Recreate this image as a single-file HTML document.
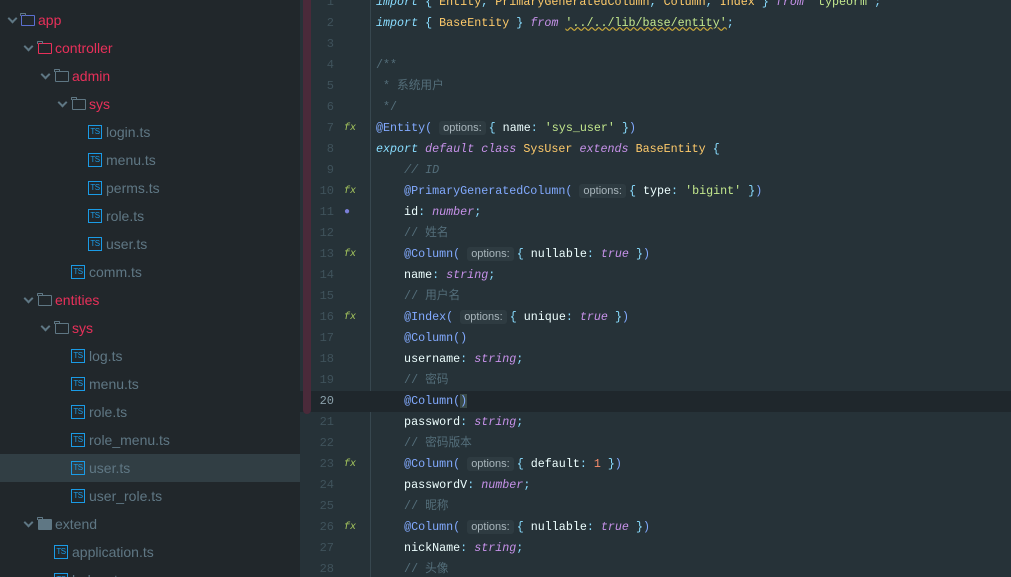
<!DOCTYPE html><html><head><meta charset="utf-8"><style>
*{margin:0;padding:0;box-sizing:border-box}
html,body{width:1011px;height:577px;overflow:hidden}
body{background:#263238;position:relative;font-family:"Liberation Sans","Noto Sans CJK SC",sans-serif}
#side{position:absolute;left:0;top:0;width:300px;height:577px;background:#21272b;overflow:hidden}
.r{position:absolute;left:0;width:300px;height:28px;font-size:14px;line-height:28px;color:#5f7784}
.r.sel{background:#313e44}
.r .a{position:absolute;top:9px;width:7px;height:7px;border-right:2px solid #5f7784;border-bottom:2px solid #5f7784;transform:rotate(45deg)}
.r .f{position:absolute;top:9px;width:14px;height:11px;border:1.6px solid #5f7784;border-radius:1px}
.r .f:before{content:"";position:absolute;left:-1.6px;top:-3.5px;width:6px;height:3px;border:1.6px solid #5f7784;border-bottom:none;border-radius:1px 1px 0 0;box-sizing:border-box}
.r .f.fill{background:#5f7784}
.r .ts{position:absolute;top:7px;width:14px;height:14px;border:1.3px solid #1a9be6;color:#1a9be6;font-size:8px;line-height:12px;text-align:center;font-style:normal;font-family:"Liberation Sans",sans-serif;letter-spacing:-0.5px}
.r .t{position:absolute}
.red{color:#e8305a}
#ed{position:absolute;left:300px;top:0;width:711px;height:577px;overflow:hidden}
#stripe{position:absolute;left:3px;top:0;width:8px;height:414px;background:#4a2a3a;border-radius:0 0 4px 4px}
#gl{position:absolute;left:70px;top:0;width:1px;height:577px;background:#37474f}
.l{position:absolute;left:0;width:711px;height:21px;line-height:21px;font-family:"Liberation Mono","Noto Sans CJK SC",monospace;font-size:11.7px;color:#eeffff;white-space:pre}
.l.cur{background:#1f272c}
.n{position:absolute;left:0;width:34px;text-align:right;color:#3f525b;font-size:12px}
.cur .n{color:#8aa0aa}
.c{position:absolute;left:76px}
.k{color:#89ddff;font-style:italic}.p{color:#c792ea;font-style:italic}.y{color:#ffcb6b}.s{color:#c3e88d}.u{color:#89ddff}.d{color:#82aaff}.cm{color:#546e7a}.cz{color:#546e7a}.nm{color:#f78c6c}
.h{font-family:"Liberation Sans",sans-serif;font-size:11px;color:#a8b5bb;background:#2e3b41;border-radius:3px;padding:1px 4px;margin-right:3px}
.g{position:absolute;left:44px;color:#a7c85e;font-size:10px;font-style:italic}
.und{text-decoration:underline wavy #c9a83a}
</style></head><body>
<div id="side">
<div class="r" style="top:6px"><i class="a" style="left:9px"></i><i class="f" style="left:21px;border-color:#5b6fd0"></i><span class="t red" style="left:38px">app</span></div>
<div class="r" style="top:34px"><i class="a" style="left:25px"></i><i class="f" style="left:38px;border-color:#e8305a"></i><span class="t red" style="left:55px">controller</span></div>
<div class="r" style="top:62px"><i class="a" style="left:42px"></i><i class="f" style="left:55px"></i><span class="t red" style="left:72px">admin</span></div>
<div class="r" style="top:90px"><i class="a" style="left:59px"></i><i class="f" style="left:72px"></i><span class="t red" style="left:89px">sys</span></div>
<div class="r" style="top:118px"><i class="ts" style="left:88px">TS</i><span class="t" style="left:106px">login.ts</span></div>
<div class="r" style="top:146px"><i class="ts" style="left:88px">TS</i><span class="t" style="left:106px">menu.ts</span></div>
<div class="r" style="top:174px"><i class="ts" style="left:88px">TS</i><span class="t" style="left:106px">perms.ts</span></div>
<div class="r" style="top:202px"><i class="ts" style="left:88px">TS</i><span class="t" style="left:106px">role.ts</span></div>
<div class="r" style="top:230px"><i class="ts" style="left:88px">TS</i><span class="t" style="left:106px">user.ts</span></div>
<div class="r" style="top:258px"><i class="ts" style="left:71px">TS</i><span class="t" style="left:89px">comm.ts</span></div>
<div class="r" style="top:286px"><i class="a" style="left:25px"></i><i class="f" style="left:38px"></i><span class="t red" style="left:55px">entities</span></div>
<div class="r" style="top:314px"><i class="a" style="left:42px"></i><i class="f" style="left:55px"></i><span class="t red" style="left:72px">sys</span></div>
<div class="r" style="top:342px"><i class="ts" style="left:71px">TS</i><span class="t" style="left:89px">log.ts</span></div>
<div class="r" style="top:370px"><i class="ts" style="left:71px">TS</i><span class="t" style="left:89px">menu.ts</span></div>
<div class="r" style="top:398px"><i class="ts" style="left:71px">TS</i><span class="t" style="left:89px">role.ts</span></div>
<div class="r" style="top:426px"><i class="ts" style="left:71px">TS</i><span class="t" style="left:89px">role_menu.ts</span></div>
<div class="r sel" style="top:454px"><i class="ts" style="left:71px">TS</i><span class="t" style="left:89px">user.ts</span></div>
<div class="r" style="top:482px"><i class="ts" style="left:71px">TS</i><span class="t" style="left:89px">user_role.ts</span></div>
<div class="r" style="top:510px"><i class="a" style="left:25px"></i><i class="f fill" style="left:38px"></i><span class="t" style="left:55px">extend</span></div>
<div class="r" style="top:538px"><i class="ts" style="left:54px">TS</i><span class="t" style="left:72px">application.ts</span></div>
<div class="r" style="top:566px"><i class="ts" style="left:54px">TS</i><span class="t" style="left:72px">helper.ts</span></div>
</div>
<div id="ed">
<div id="gl"></div>
<div class="l" style="top:-8.5px"><span class="n">1</span><span class="c"><span class="k">import</span> <span class="u">{</span> <span class="y">Entity</span><span class="u">,</span> <span class="y">PrimaryGeneratedColumn</span><span class="u">,</span> <span class="y">Column</span><span class="u">,</span> <span class="y">Index</span> <span class="u">}</span> <span class="p">from</span> <span class="s">'typeorm'</span><span class="u">;</span></span></div>
<div class="l" style="top:12.5px"><span class="n">2</span><span class="c"><span class="k">import</span> <span class="u">{</span> <span class="y">BaseEntity</span> <span class="u">}</span> <span class="p">from</span> <span class="s und">'../../lib/base/entity'</span><span class="u">;</span></span></div>
<div class="l" style="top:33.5px"><span class="n">3</span></div>
<div class="l" style="top:54.5px"><span class="n">4</span><span class="c cz">/**</span></div>
<div class="l" style="top:75.5px"><span class="n">5</span><span class="c cz"> * 系统用户</span></div>
<div class="l" style="top:96.5px"><span class="n">6</span><span class="c cz"> */</span></div>
<div class="l" style="top:117.5px"><span class="n">7</span><span class="g">fx</span><span class="c"><span class="d">@Entity(</span> <span class="h">options:</span><span class="u">{</span> name<span class="u">:</span> <span class="s">'sys_user'</span> <span class="u">}</span><span class="d">)</span></span></div>
<div class="l" style="top:138.5px"><span class="n">8</span><span class="c"><span class="k">export</span> <span class="p">default class</span> <span class="y">SysUser</span> <span class="p">extends</span> <span class="y">BaseEntity</span> <span class="u">{</span></span></div>
<div class="l" style="top:159.5px"><span class="n">9</span><span class="c cm">    <i>// ID</i></span></div>
<div class="l" style="top:180.5px"><span class="n">10</span><span class="g">fx</span><span class="c">    <span class="d">@PrimaryGeneratedColumn(</span> <span class="h">options:</span><span class="u">{</span> type<span class="u">:</span> <span class="s">'bigint'</span> <span class="u">}</span><span class="d">)</span></span></div>
<div class="l" style="top:201.5px"><span class="n">11</span><span class="g" style="color:#7a7fd8">●</span><span class="c">    id<span class="u">:</span> <span class="p">number</span><span class="u">;</span></span></div>
<div class="l" style="top:222.5px"><span class="n">12</span><span class="c cm">    // 姓名</span></div>
<div class="l" style="top:243.5px"><span class="n">13</span><span class="g">fx</span><span class="c">    <span class="d">@Column(</span> <span class="h">options:</span><span class="u">{</span> nullable<span class="u">:</span> <span class="p">true</span> <span class="u">}</span><span class="d">)</span></span></div>
<div class="l" style="top:264.5px"><span class="n">14</span><span class="c">    name<span class="u">:</span> <span class="p">string</span><span class="u">;</span></span></div>
<div class="l" style="top:285.5px"><span class="n">15</span><span class="c cm">    // 用户名</span></div>
<div class="l" style="top:306.5px"><span class="n">16</span><span class="g">fx</span><span class="c">    <span class="d">@Index(</span> <span class="h">options:</span><span class="u">{</span> unique<span class="u">:</span> <span class="p">true</span> <span class="u">}</span><span class="d">)</span></span></div>
<div class="l" style="top:327.5px"><span class="n">17</span><span class="c">    <span class="d">@Column()</span></span></div>
<div class="l" style="top:348.5px"><span class="n">18</span><span class="c">    username<span class="u">:</span> <span class="p">string</span><span class="u">;</span></span></div>
<div class="l" style="top:369.5px"><span class="n">19</span><span class="c cm">    // 密码</span></div>
<div class="l cur" style="top:390.5px"><span class="n">20</span><span class="c">    <span class="d">@Column(<span style="background:#3a4a48">)</span></span></span></div>
<div class="l" style="top:411.5px"><span class="n">21</span><span class="c">    password<span class="u">:</span> <span class="p">string</span><span class="u">;</span></span></div>
<div class="l" style="top:432.5px"><span class="n">22</span><span class="c cm">    // 密码版本</span></div>
<div class="l" style="top:453.5px"><span class="n">23</span><span class="g">fx</span><span class="c">    <span class="d">@Column(</span> <span class="h">options:</span><span class="u">{</span> default<span class="u">:</span> <span class="nm">1</span> <span class="u">}</span><span class="d">)</span></span></div>
<div class="l" style="top:474.5px"><span class="n">24</span><span class="c">    passwordV<span class="u">:</span> <span class="p">number</span><span class="u">;</span></span></div>
<div class="l" style="top:495.5px"><span class="n">25</span><span class="c cm">    // 昵称</span></div>
<div class="l" style="top:516.5px"><span class="n">26</span><span class="g">fx</span><span class="c">    <span class="d">@Column(</span> <span class="h">options:</span><span class="u">{</span> nullable<span class="u">:</span> <span class="p">true</span> <span class="u">}</span><span class="d">)</span></span></div>
<div class="l" style="top:537.5px"><span class="n">27</span><span class="c">    nickName<span class="u">:</span> <span class="p">string</span><span class="u">;</span></span></div>
<div class="l" style="top:558.5px"><span class="n">28</span><span class="c cm">    // 头像</span></div>
<div id="stripe"></div>
</div>
</body></html>
